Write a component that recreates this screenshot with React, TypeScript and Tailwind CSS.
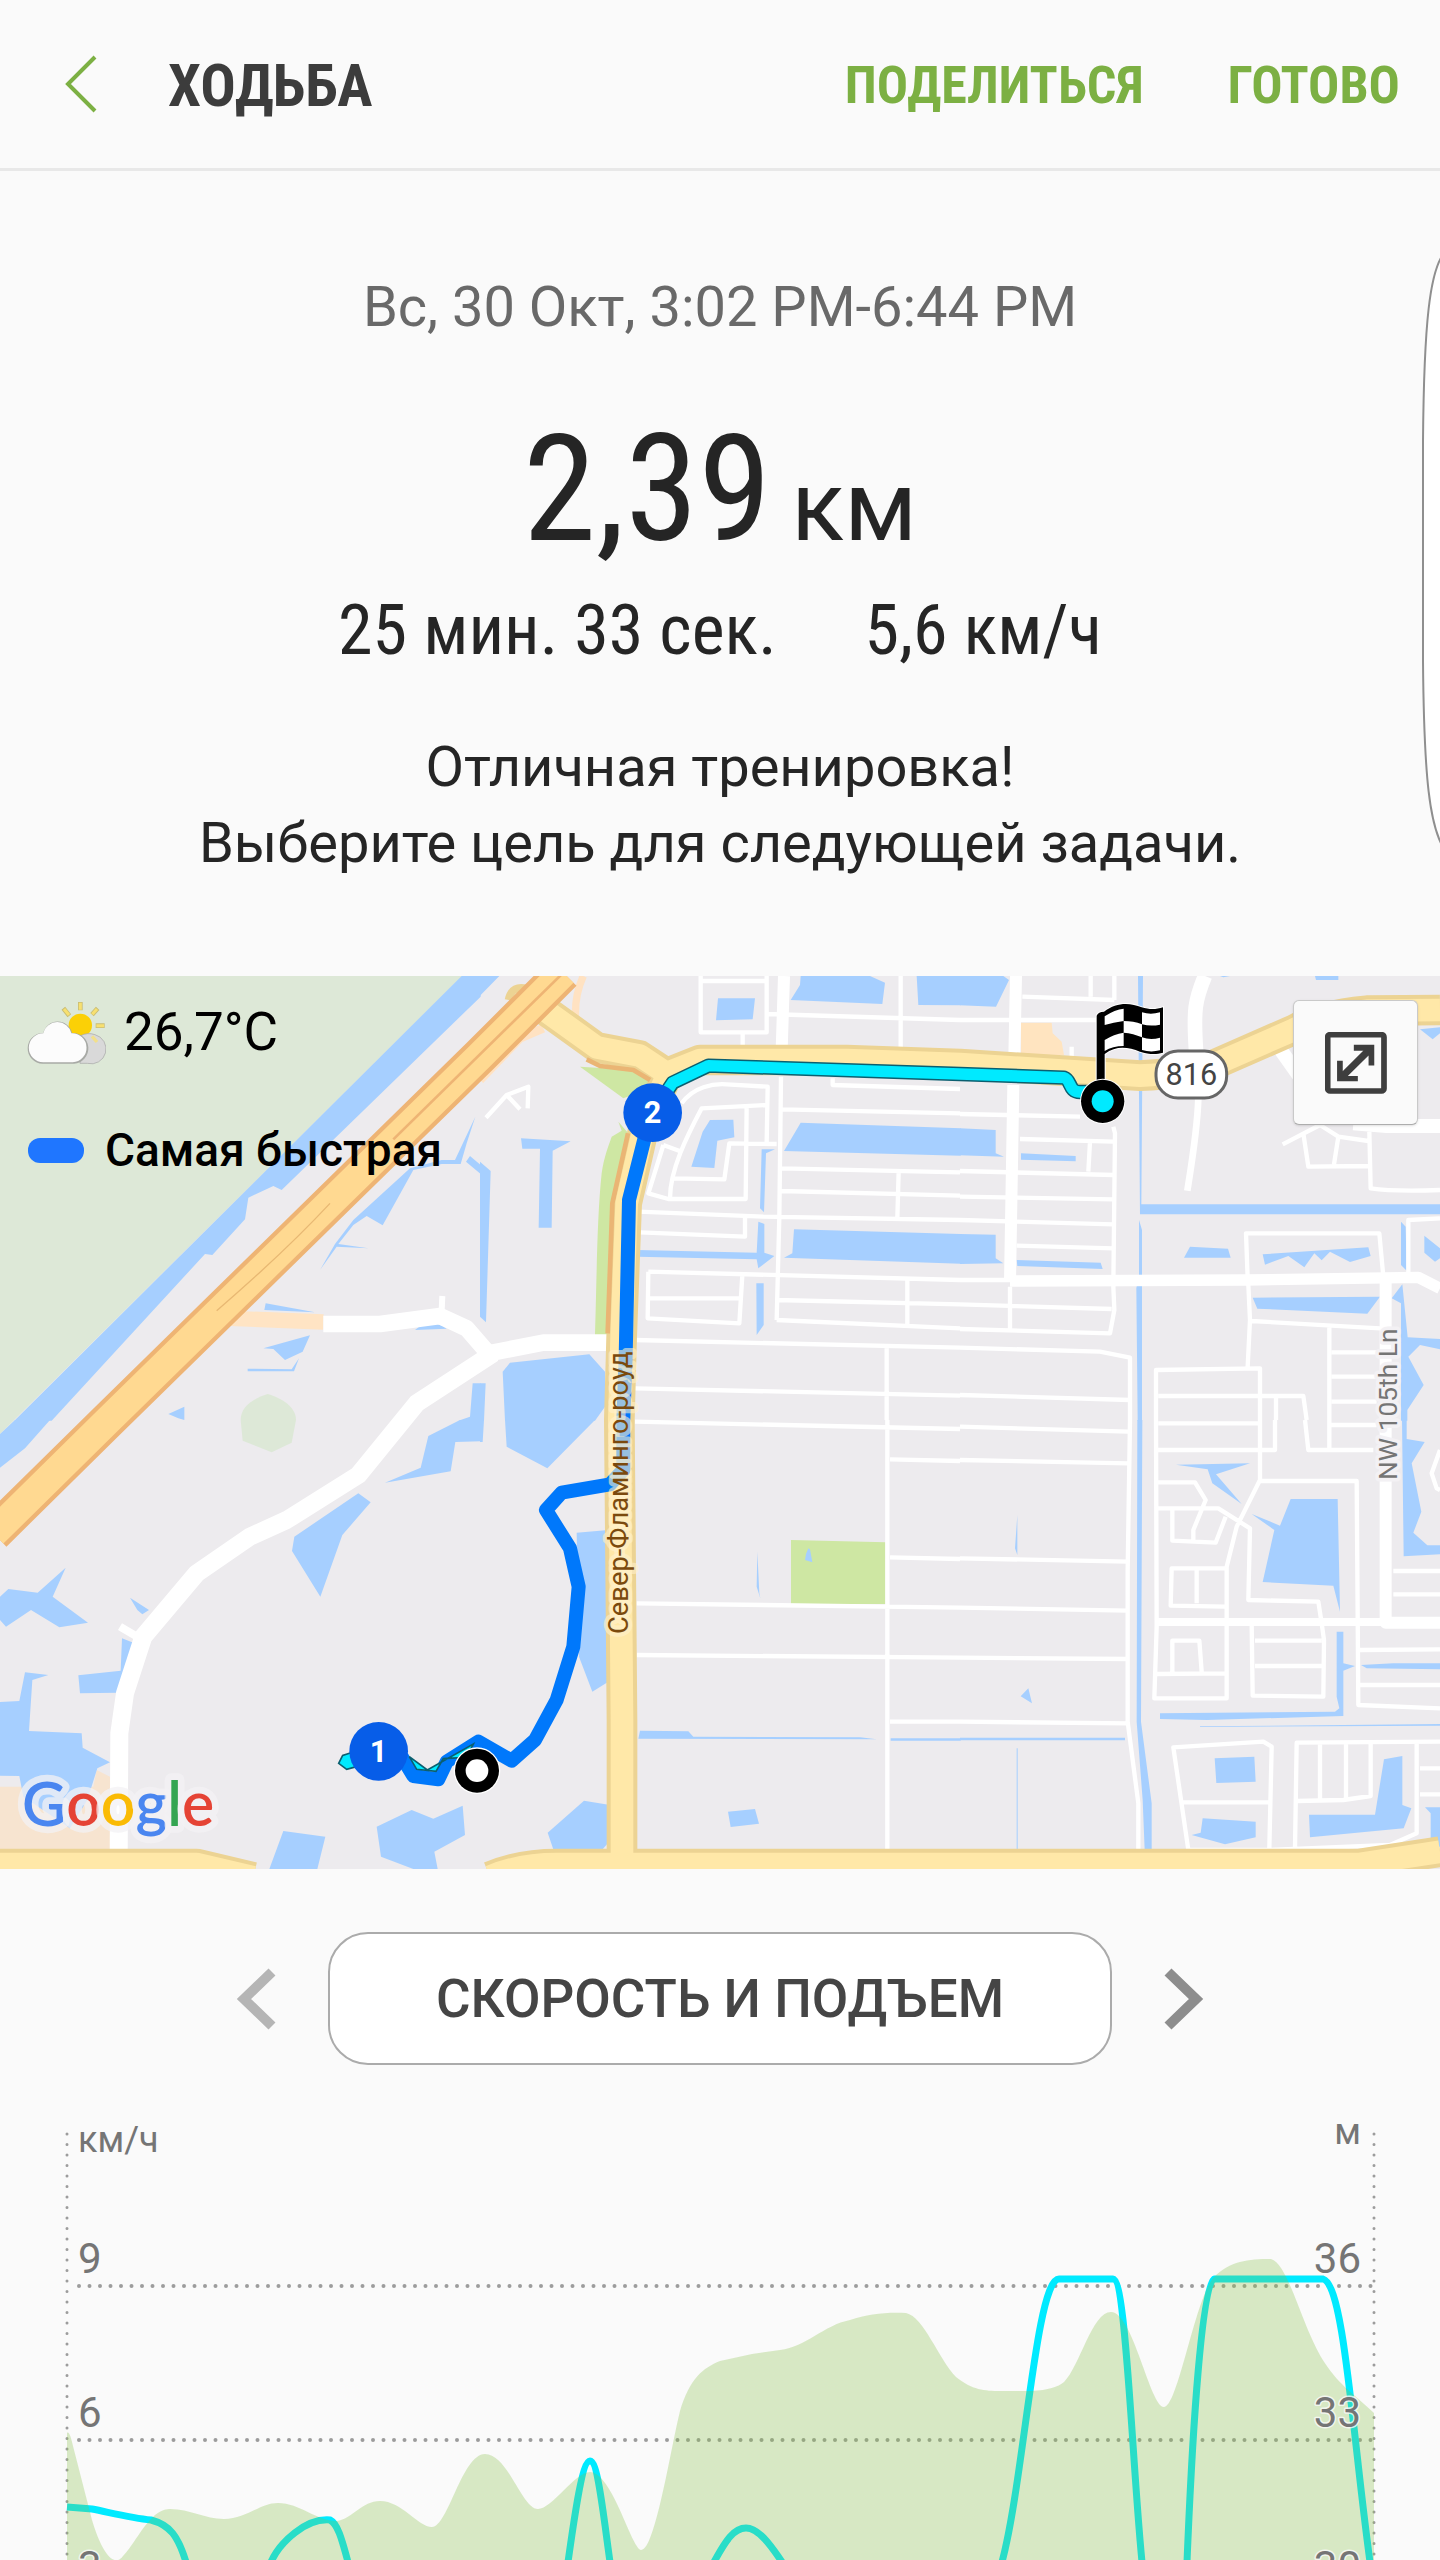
import React from "react";

const TILES = {
  A: "translate(0 -18)",
  B: "translate(1440 -18)",
  C: "translate(2880 -18)",
  D: "translate(0 1332)",
  E: "translate(1440 1332)",
  F: "translate(2880 1332)",
} as const;

type TileName = keyof typeof TILES;
type TileShapes = [TileName, string][];

const water: TileShapes = [
  ["A", "M1385 18H1442V80L845 660 820 648 745 683 735 748 637 855 615 852 155 1352H43ZM1426 440L1400 520 1382 582H1325L1240 600 1148 766 1100 738 1060 765 1015 822 1105 835 1010 830 960 900 1005 822 1060 750 1230 595 1325 570H1365ZM1410 558L1442 585V612L1398 575ZM797 1000L945 1027 793 1020ZM790 1135L930 1096 908 1145 855 1170 820 1137ZM743 1196L875 1198 897 1165 882 1204H743ZM505 1332L553 1310V1350L535 1345ZM1245 1080Q1290 1040 1340 1076ZM1418 1240H1442V1352H1375L1410 1340Z"],
  ["B", "M0 18H58L0 77ZM0 575L32 603 18 1057 0 1040ZM0 1240H17L12 1352H0ZM68 1205L90 1178 328 1153 375 1205V1310L345 1352H75ZM123 505L272 514 218 542 215 773H176L180 536H127ZM714 85H825L818 148 708 151ZM962 18H1170L1215 38 1207 102 932 90 960 45ZM1310 18H1442V106L1315 105ZM690 450L760 449 763 502 712 512 703 594 634 590 668 485ZM845 538H885L858 550 852 727 840 715ZM962 458L1442 475V557L912 543ZM473 840L830 848 835 755 853 762V848L883 858 835 895 830 868 473 860ZM829 940H851V1065L830 1095ZM942 778L1442 792V881L912 863 937 850Z"],
  ["C", "M0 18H130L147 30 108 110 0 106ZM0 475L107 480V550L132 560 0 556ZM183 550L347 558V574L183 569ZM0 792L107 794V865L130 880 0 882ZM170 870L422 878 428 897 172 888ZM534 18H549L544 703H1440V733H540ZM537 750L546 780V1352H533L529 955 537 915ZM690 830L804 836 812 863H672ZM908 853L1225 832 1232 858 1170 876 1110 845 1085 871 1063 850 1033 892 985 858 915 884ZM878 983L1260 980 1222 1031 892 1016ZM1323 755L1337 770 1340 902 1323 885ZM1393 797L1440 835V865L1425 875 1393 848ZM1380 178L1440 172V190L1418 208ZM1065 18H1135V30H1068ZM780 18H810L790 22ZM1295 985L1327 943 1343 1102 1440 1107V1138L1380 1125 1345 1160 1391 1245 1342 1320V1352H1323V1000Z"],
  ["D", "M45 0H150L75 85 0 143V42ZM1442 0H1380L1285 48 1262 143 1155 188 1352 154 1366 66 1442 64ZM1075 220L1112 247 1027 345 961 530 876 393 883 350ZM0 530L25 507 113 518 197 443 158 530 264 608 178 622 93 570 18 620 0 600ZM390 533L447 570 427 583 412 570ZM366 655L400 668 350 818 240 820 235 766 362 752ZM75 757L145 765 97 780 87 933 245 940 248 983 330 1027 292 1045 262 1140 210 1225 70 1130 58 1068 0 1067V846L58 843ZM850 1233L976 1250 952 1347H808ZM1130 1220L1235 1170 1300 1196 1388 1157 1395 1245 1303 1295 1313 1347H1240L1143 1310Z"],
  ["E", "M0 0H12L8 66H0ZM75 0H345L202 145 80 80ZM480 932L625 934 640 950 1140 952 1190 958 475 956ZM1232 955H1442V962H1232ZM744 1175L825 1167 837 1211 752 1221ZM290 338L385 330V785L337 815 297 710ZM203 1238L312 1142 390 1155V1262L340 1320 228 1312ZM832 395L838 520 841 535 830 500ZM985 385L990 388 997 427 975 420 978 402Z"],
  ["F", "M532 0H547L543 905 575 1150V1315H555L548 1140 530 905ZM1326 0H1340V57L1394 66 1355 130 1384 275 1360 338 1402 376H1440V403L1331 409ZM648 134L870 130 768 163 845 252 757 190 743 148ZM875 282L960 317 992 237H1133L1140 575 1120 497 908 486 943 330ZM1130 635H1150V730L1185 738 1150 752V888L740 900 600 897V880L1125 875 1138 865 1130 830ZM1203 735L1300 730H1440V748L1220 745ZM720 919L1440 912V917L720 921ZM764 1015L883 1010 887 1085 769 1089ZM728 1195L887 1205V1252L795 1273 695 1245 722 1238ZM1272 1018L1327 1008V1155L1354 1165 1331 1225 1050 1252 1047 1184H1245ZM1395 1162H1440V1280H1412V1180ZM172 285V405L165 385ZM205 805L216 850 182 829ZM0 953H495V961H0ZM170 985H173V1300H170Z"],
];

const streets: TileShapes = [
  ["B", "M662 18V187H860V18M662 33H860M788 190V235M860 132L1440 150M1262 18V245M1058 325V345L1440 357M905 418L1440 430M605 400C640 350 700 340 740 343L863 350 860 515M550 525L605 545M550 525L505 670 565 687H797L800 405M860 405L665 415C620 500 570 600 570 685M580 625L733 628 748 520 890 522M475 725L850 740 1440 750M480 787L795 800V740M903 595L1440 607M905 663L1440 677M1256 605L1252 745M505 905L1440 930M505 905L503 1045 778 1060 787 915M510 985H780M890 990L1440 1003M1282 930V1065M890 1050L1440 1075M465 1110L1440 1133M465 1255L1440 1277M1220 1133V1350M18 443L80 375 145 350 143 415M80 375L120 418M903 320L898 740 890 1050"],
  ["C", "M187 80L463 90M463 18V90M392 18V80M0 150H410M0 432L360 440M460 470L465 490 460 950 463 1020 450 1090 0 1077M180 507L460 515M390 515L385 605M0 603L460 615M0 680L460 688M0 750L460 763M170 827L460 835M0 930H150M150 950V1075M0 1003L455 1017M0 1133L420 1145 510 1163V1350M0 1275L510 1290M968 523L1080 465 1135 500 1225 513M1030 490L1045 590 1225 588M1135 500L1122 583M1228 485L1232 655Q1300 665 1440 660M863 925L858 790H1258L1270 920M1345 915V750L1440 745M865 945L870 1050 863 1190M875 1053L1260 1075M1108 1070V1350M1115 1147H1260M1115 1220H1250M1115 1295H1250M588 1350V1200L900 1195V1350M595 1278H1030L1040 1350M948 1280V1350M335 230V270"],
  ["E", "M1222 0V1310M465 5L1440 27M1230 118L1440 123M1230 412L1440 417M470 550L1440 563M470 705L1440 713M1230 905H1440"],
  ["F", "M588 0L590 620 583 835H800V440M595 10H895M900 0V180L830 320 800 440M590 90H945V0M1035 0L1045 90H1240M1108 0V85M1110 15H1250M900 183H1190L1195 855 1440 865M595 187H705L737 240 700 330V360M590 265H775L870 325 865 540 1075 545 1085 610 1092 660 1090 830 878 827 875 615M637 265V362L767 368 797 290M797 445H635L632 557 795 560M710 450V550M637 755V662H718L725 755M590 762L800 760M885 662H1085M885 738H1085M1300 453H1440M1300 523H1440M1200 690L1440 688M1200 795H1440M685 1290L640 982 910 965 935 980 928 1285M1005 1285L1010 968 1440 965M665 1147H925M685 1290H930L1290 1275 1370 1240V970M1080 970V1135M1158 970V1135M1232 970V1128L1150 1140 1010 1143M1380 1045H1440M1380 1123H1440M510 0L503 450V905L535 1150V1305M0 20L505 35M0 120L505 130M0 415L505 425M0 563L505 572M0 713L505 717M0 905L505 910M1440 90L1415 160 1430 205 1440 210"],
];

const avenues: { tile: TileName; d: string; width: number }[] = [
  { tile: "A", d: "M970 1062H1140L1320 1038 1400 1075 1465 1150 1630 1118H1835", width: 50 },
  { tile: "A", d: "M1325 1020L1327 978", width: 18 },
  { tile: "A", d: "M1480 1150L1250 1300 1075 1515 860 1650 750 1700 590 1810 430 2000 375 2170 358 2290 356 2665", width: 54 },
  { tile: "D", d: "M360 620L420 655", width: 24 },
  { tile: "B", d: "M912 18L905 240", width: 36 },
  { tile: "C", d: "M168 18L163 260M160 345L150 935", width: 36 },
  { tile: "C", d: "M150 933L860 930 1375 922 1440 955", width: 34 },
  { tile: "C", d: "M735 18C705 90 700 120 708 240", width: 44 },
  { tile: "C", d: "M715 385C712 480 695 580 682 662", width: 20 },
  { tile: "C", d: "M955 230L1040 350M1180 460L1280 468H1440", width: 42 },
  { tile: "C", d: "M1277 930V1958H1440", width: 36 },
  { tile: "F", d: "M593 606H1280", width: 24 },
];

const arterials = [
  "M1866 2660V2250L1858 1350 1865 1100 1880 700 1930 480 2000 320",
  "M1620 110L1790 232 1920 257 2000 310 2100 270H2540L2880 282 3420 317Q3560 310 3640 285L3880 180Q3960 135 4100 122L4320 120",
  "M0 2682H590L760 2722M1470 2720Q1560 2682 1670 2682H4080L4320 2645",
];

const freeway = "M1690 8L1440 258 325 1350 -20 1690";
const blueRoute =
  "M500 480L447 690 437 1160 430 1350 430 1500 390 1543 245 1568 198 1620 270 1735 296 1850 280 2030 230 2190 165 2310 95 2372 -5 2315 -100 2375 -125 2428 -200 2418 -235 2360";
const cyanRoute = "M560 365L578 338 685 287 1440 312 1752 323C1775 330 1765 366 1800 366L1850 366";

function ShapeLayer({ shapes }: { shapes: TileShapes }) {
  return (
    <>
      {shapes.map(([tile, d], i) => (
        <path key={i} transform={TILES[tile]} d={d} />
      ))}
    </>
  );
}

function RouteMap() {
  return (
    <svg
      viewBox="0 0 4320 2679"
      className="block w-full font-[Roboto,sans-serif]"
      role="img"
      aria-label="Карта маршрута"
    >
      <rect width="4320" height="2679" fill="#edebee" />

      <g fill="#dde8d7">
        <path transform={TILES.A} d="M0 18H1387L0 1392Z" />
        <path transform={TILES.A} d="M722 1350C722 1310 760 1285 803 1272 845 1285 888 1310 888 1350L875 1418 815 1447 728 1412Z" />
      </g>
      <g fill="#cee7a3">
        <path transform={TILES.B} d="M300 290L460 300 540 345 430 385Z" />
        <path transform={TILES.B} d="M415 455L445 490 400 700 385 1095H345C350 950 350 750 365 610 372 560 385 530 395 500L425 482Z" />
        <path transform={TILES.E} d="M933 360L1217 367V552H933Z" />
      </g>
      <path transform={TILES.D} fill="#f7e4d0" d="M0 1100H280L290 1050 330 1070V1300H0Z" />
      <path transform={TILES.C} fill="#ffe4c0" d="M183 158H275L278 190 305 215 312 255H183Z" />

      <g fill="#a6cfff">
        <ShapeLayer shapes={water} />
      </g>
      <g fill="none" stroke="#ffffff" strokeWidth="13" strokeLinejoin="round">
        <ShapeLayer shapes={streets} />
      </g>
      <path transform={TILES.A} d="M690 1045L970 1056" fill="none" stroke="#ffe4c4" strokeWidth="46" />
      <g fill="none" stroke="#ffffff" strokeLinejoin="round">
        {avenues.map((a, i) => (
          <path key={i} transform={TILES[a.tile]} d={a.d} strokeWidth={a.width} />
        ))}
      </g>

      <g transform={TILES.A} fill="none" strokeLinejoin="round">
        <path d="M1750 18Q1712 100 1735 205" stroke="#ffe2c2" strokeWidth="22" />
        <path d="M1440 330L1560 205 1630 175" stroke="#ffe2c2" strokeWidth="26" />
        <g stroke="#ecd393" strokeWidth="92">
          {arterials.map((d) => <path key={d} d={d} />)}
        </g>
        <path d="M1760 268L1800 288 1900 300 1950 330M1884 490L1837 700 1823 1090" stroke="#eab574" strokeWidth="14" />
        <g stroke="#ffe8a8" strokeWidth="68">
          {arterials.map((d) => <path key={d} d={d} />)}
        </g>
        <path d="M1525 90Q1535 45 1580 55" stroke="#ecd393" strokeWidth="22" />
        <path d={freeway} stroke="#eeb474" strokeWidth="112" />
        <path d={freeway} stroke="#ffd991" strokeWidth="86" />
        <path d="M1690 8L1180 508" stroke="#eeb474" strokeWidth="8" />
        <path d="M990 700Q850 850 650 1022" stroke="#e8b873" strokeWidth="4" />
      </g>

      <g transform={TILES.B} fill="none" strokeLinejoin="round">
        <path d={blueRoute} stroke="#0078fb" strokeWidth="42" />
        <path d={cyanRoute} stroke="#0b5f70" strokeWidth="43" />
        <path d={cyanRoute} stroke="#00eaff" strokeWidth="34" />
      </g>
      <g transform={TILES.D} fill="#00eaff" stroke="#0b5f70" strokeWidth="5">
        <path d="M1016 1030L1028 1006 1060 996 1070 1040 1040 1048Z" />
        <path d="M1228 1010L1282 1050 1420 972 1400 1012 1330 1016 1308 1054 1250 1048Z" />
      </g>

      <text
        transform="translate(1885 1974) rotate(-90)"
        fill="#7b4a0d"
        stroke="#fff1cc"
        strokeOpacity="0.6"
        strokeWidth="26"
        strokeLinejoin="round"
        paintOrder="stroke"
        fontSize="82"
      >
        Север-Фламинго-роуд
      </text>
      <text
        transform="translate(4192 1512) rotate(-90)"
        fill="#757575"
        stroke="#f3f1f4"
        strokeWidth="22"
        strokeLinejoin="round"
        paintOrder="stroke"
        fontSize="79"
      >
        NW 105th Ln
      </text>

      <g transform={TILES.C}>
        <rect x="588" y="243" width="212" height="141" rx="66" fill="#ffffff" stroke="#666666" strokeWidth="9" />
        <text x="694" y="346" textAnchor="middle" fontSize="92" fill="#444444">816</text>
        <path
          d="M410 137Q415 125 432 125C470 96 510 98 545 112 570 120 590 118 609 112V248C585 255 565 252 540 245 505 232 470 225 434 252V340H410Z"
          fill="#000000"
          stroke="#ffffff"
          strokeWidth="6"
          paintOrder="stroke"
        />
        <path
          d="M434 139Q465 118 491 116V153Q460 157 434 165ZM546 127Q572 135 600 127V164Q572 170 546 163ZM491 153Q520 153 546 163V202Q520 190 491 188ZM434 210Q462 192 491 188V228Q458 228 434 243ZM546 202Q572 212 600 203V241Q572 248 546 240Z"
          fill="#ffffff"
        />
        <circle cx="428" cy="394" r="68" fill="#ffffff" />
        <circle cx="428" cy="394" r="65" fill="#000000" />
        <circle cx="428" cy="394" r="33" fill="#00eaff" />
      </g>
      <g transform={TILES.D}>
        <circle cx="1431" cy="1052" r="70" fill="#ffffff" />
        <circle cx="1431" cy="1052" r="66" fill="#000000" />
        <circle cx="1431" cy="1052" r="34" fill="#ffffff" />
      </g>
      <g textAnchor="middle" fontSize="92" fontWeight="700">
        <circle cx="1958" cy="410" r="88" fill="#075de8" />
        <text x="1958" y="442" fill="#ffffff">2</text>
        <circle cx="1136" cy="2326" r="88" fill="#075de8" />
        <text x="1136" y="2358" fill="#ffffff">1</text>
      </g>

      <text
        x="66"
        y="2550"
        className="font-[Lato,sans-serif]"
        fontSize="182"
        fontWeight="600"
        stroke="#f3f1f4"
        strokeOpacity="0.75"
        strokeWidth="40"
        strokeLinejoin="round"
        paintOrder="stroke"
      >
        <tspan fill="#4a86f0">G</tspan>
        <tspan fill="#e54335">o</tspan>
        <tspan fill="#fabb05">o</tspan>
        <tspan fill="#4a86f0">g</tspan>
        <tspan fill="#34a552">l</tspan>
        <tspan fill="#e54335">e</tspan>
      </text>
    </svg>
  );
}

function WeatherIcon() {
  return (
    <svg viewBox="78 82 240 195" className="h-[65px] w-20" aria-hidden="true">
      <g stroke="#c9bd74" strokeWidth="14">
        <path d="M241 88V113M190 107L208 129M293 107L276 126M287 159H314" />
      </g>
      <g stroke="#f7e070" strokeWidth="9">
        <path d="M241 90V111M192 109L207 127M291 109L277 125M289 159H312" />
      </g>
      <circle cx="241" cy="158" r="35" fill="#fbd006" />
      <path d="M240 272V190Q262 178 285 186A44 44 0 0 1 262 272Z" fill="#d9d9d9" stroke="#a5a5a5" strokeWidth="2" />
      <path d="M276 191L291 208" stroke="#f2e08a" strokeWidth="10" />
      <path d="M128 273A46 46 0 0 1 130 181A44 44 0 0 1 216 181A46 46 0 0 1 222 273Z" fill="#a8aaa6" />
      <path d="M130 269A43 43 0 0 1 130 182A43 43 0 0 1 214 182A43 43 0 0 1 218 269Z" fill="#fcfcfc" />
    </svg>
  );
}

const elevationArea =
  "M67 2433C69 2431 71 2437 73 2446L92 2520C104 2560 116 2566 123 2556C138 2540 150 2509 170 2509C190 2509 205 2519 224 2519C246 2519 260 2503 278 2503C300 2503 316 2521 337 2521C352 2519 362 2501 380 2501C402 2501 418 2527 432 2527C448 2527 462 2454 485 2454C508 2454 522 2509 538 2509C552 2509 575 2472 590 2472C612 2472 632 2550 641 2550C655 2550 670 2452 680 2411C690 2378 703 2368 720 2361L752 2354L780 2350C806 2347 824 2325 850 2320C868 2314 886 2312 906 2313C924 2317 938 2358 956 2377C972 2390 985 2391 1000 2391H1032C1048 2390 1058 2387 1064 2382C1080 2366 1092 2312 1111 2312C1133 2312 1150 2407 1164 2407C1178 2407 1195 2298 1214 2277C1230 2261 1248 2259 1271 2259C1288 2264 1300 2320 1321 2357C1338 2385 1352 2392 1374 2413V2560H67Z";

const speedLine =
  "M67 2507L92 2509C112 2513 132 2518 151 2520C170 2525 178 2536 186 2562M271 2562C280 2542 306 2518 330 2520C338 2524 342 2540 348 2562M568 2562C574 2520 582 2461 590 2461C598 2461 604 2520 610 2562M714 2562C726 2540 734 2528 746 2528C758 2528 770 2544 782 2562M1002 2562C1024 2480 1036 2279 1059 2279H1113C1126 2279 1132 2460 1142 2562M1187 2562C1192 2440 1202 2279 1214 2279H1323C1344 2285 1352 2430 1370 2562";

function SpeedChart() {
  return (
    <svg
      viewBox="0 2120 1440 440"
      className="mt-[55px] block w-full font-[Roboto,sans-serif]"
      role="img"
      aria-label="Скорость и подъем"
    >
      <g fill="none" stroke="#9c9c9c" strokeWidth="4" strokeLinecap="round" strokeDasharray="0 10.5">
        <path d="M67 2134V2560M1374 2134V2560" strokeWidth="3" />
        <path d="M79 2286H1372M79 2440H1372" />
      </g>
      <path d={speedLine} fill="none" stroke="#00eaff" strokeWidth="7" />
      <path d={elevationArea} fill="#89c149" fillOpacity="0.3" />
      <g
        fontSize="42"
        fill="#757575"
        stroke="#fafafa"
        strokeOpacity="0.8"
        strokeWidth="3"
        strokeLinejoin="round"
        paintOrder="stroke"
      >
        <text x="78" y="2152" fontSize="36">км/ч</text>
        <text x="78" y="2273">9</text>
        <text x="78" y="2427">6</text>
        <text x="78" y="2581">3</text>
        <g textAnchor="end">
          <text x="1361" y="2144" fontSize="36">м</text>
          <text x="1361" y="2273">36</text>
          <text x="1361" y="2427">33</text>
          <text x="1361" y="2581">30</text>
        </g>
      </g>
    </svg>
  );
}

export default function App() {
  return (
    <div className="min-h-screen overflow-hidden bg-[#fafafa] font-[Roboto,sans-serif] text-[#252525]">
      <header className="flex h-[171px] items-center border-b-[3px] border-[#e8e8e8] pr-10 pl-[60px] font-['Roboto_Condensed',Roboto,sans-serif] font-bold">
        <button type="button" aria-label="Назад" className="mr-[64px] text-[#7cb043]">
          <svg viewBox="0 0 44 60" className="h-[60px] w-11" fill="none" stroke="currentColor" strokeWidth="4">
            <path d="M35 3L8 30L35 57" />
          </svg>
        </button>
        <h1 className="pt-1 text-[59px] leading-[72px] text-[#3c3c3c]">ХОДЬБА</h1>
        <nav className="ml-auto flex gap-[84px] pt-1 text-[52px] leading-[72px] text-[#7cb043]">
          <button type="button">ПОДЕЛИТЬСЯ</button>
          <button type="button">ГОТОВО</button>
        </nav>
      </header>

      <main>
        <section className="relative pt-[104px] pb-[95px] text-center">
          <p className="text-[56px] leading-[64px] text-[#696969]">Вс, 30 Окт, 3:02 PM-6:44 PM</p>
          <p className="mt-[71px] flex items-baseline justify-center gap-5">
            <span className="font-['Roboto_Condensed',Roboto,sans-serif] text-[148px] leading-[160px]">2,39</span>
            <span className="text-[98px] leading-[112px]">км</span>
          </p>
          <p className="mt-5 flex justify-center gap-[88px] font-['Roboto_Condensed',Roboto,sans-serif] text-[70px] leading-[80px]">
            <span>25 мин. 33 сек.</span>
            <span>5,6 км/ч</span>
          </p>
          <p className="mt-[59px] text-[56px] leading-[76px]">
            Отличная тренировка!
            <br />
            Выберите цель для следующей задачи.
          </p>
          <svg viewBox="0 0 20 600" className="absolute top-[80px] right-0 h-[600px] w-5" aria-hidden="true">
            <path d="M24 2C10 20 4 70 3 190V410C4 530 10 575 24 598" fill="#ffffff" stroke="#8f8f8f" strokeWidth="2" />
          </svg>
        </section>

        <section className="relative">
          <RouteMap />
          <div className="absolute top-5 left-[26px] text-black">
            <p className="flex items-center gap-[18px] text-[53px] leading-[72px]">
              <WeatherIcon />
              26,7°C
            </p>
            <p className="mt-[54px] flex items-center gap-[21px] text-[46px] leading-[56px] font-medium">
              <span className="ml-0.5 h-[25px] w-14 rounded-xl bg-[#1f76ff]" />
              Самая быстрая
            </p>
          </div>
          <button
            type="button"
            aria-label="Развернуть карту"
            className="absolute top-6 right-[22px] flex size-[125px] items-center justify-center rounded-md border border-[#c9c9c9] border-b-[#adadad] bg-[#fafafa] shadow-sm"
          >
            <svg viewBox="1096 186 185 185" className="size-[62px]" fill="#3e3e3e" aria-hidden="true">
              <rect x="1104" y="194" width="168" height="168" rx="7" fill="none" stroke="#3e3e3e" strokeWidth="17" />
              <path d="M1182 224H1243V286H1226V256L1164 317H1194V333H1132V272H1149V303L1211 242H1182Z" />
              <path d="M1146 320L1229 237" stroke="#3e3e3e" strokeWidth="19" />
            </svg>
          </button>
        </section>

        <section className="pt-[63px]">
          <div className="flex items-center justify-center gap-12">
            <button type="button" aria-label="Предыдущий график" className="text-[#b5b5b5]">
              <svg viewBox="0 0 46 64" className="h-16 w-[46px]" fill="none" stroke="currentColor" strokeWidth="10">
                <path d="M38 5L10 32L38 59" />
              </svg>
            </button>
            <button
              type="button"
              className="h-[133px] w-[784px] rounded-[40px] border-2 border-[#ababab] bg-white text-[53px] leading-[72px] font-medium text-[#454545]"
            >
              СКОРОСТЬ И ПОДЪЕМ
            </button>
            <button type="button" aria-label="Следующий график" className="text-[#8d8d8d]">
              <svg viewBox="0 0 46 64" className="h-16 w-[46px]" fill="none" stroke="currentColor" strokeWidth="10">
                <path d="M8 5L36 32L8 59" />
              </svg>
            </button>
          </div>
          <SpeedChart />
        </section>
      </main>
    </div>
  );
}
